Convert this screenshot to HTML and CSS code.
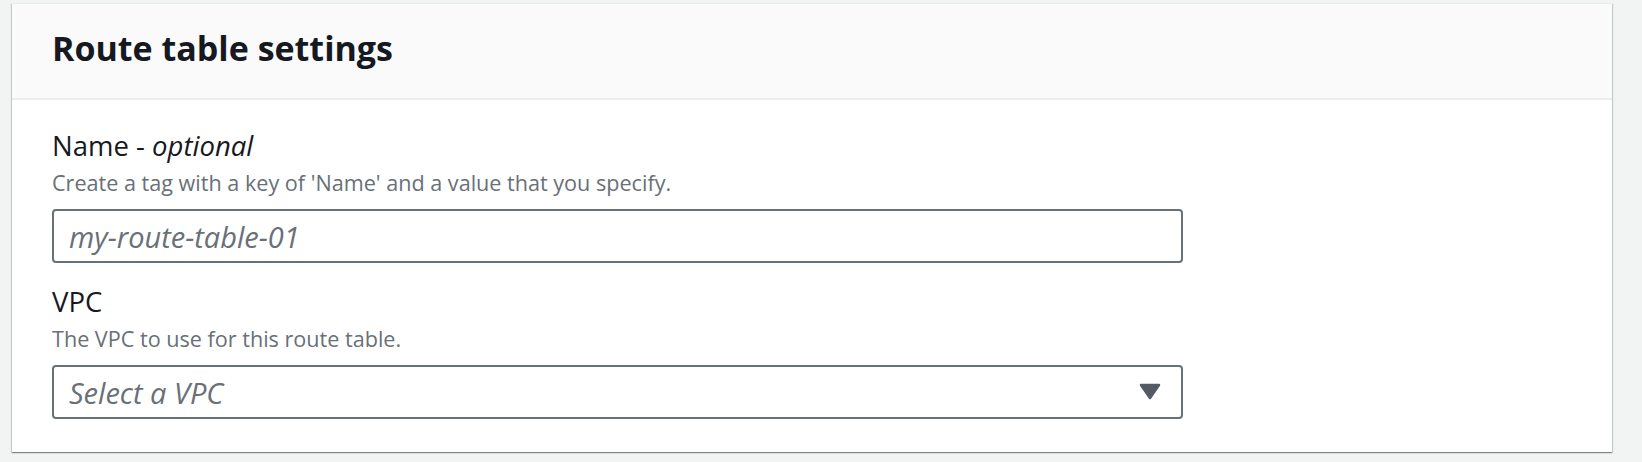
FILE: index.html
```html
<!DOCTYPE html>
<html lang="en">
<head>
<meta charset="utf-8">
<title>Route table settings</title>
<link rel="stylesheet" href="styles.css">
</head>
<body>
  <section class="container">
    <div class="container-header">
      <h2 class="title">Route table settings</h2>
    </div>
    <div class="container-content">
      <div class="field">
        <label class="label" for="rt-name">Name - <i>optional</i></label>
        <div class="description">Create a tag with a key of 'Name' and a value that you specify.</div>
        <input class="control" id="rt-name" type="text" placeholder="my-route-table-01">
      </div>
      <div class="field">
        <label class="label">VPC</label>
        <div class="description">The VPC to use for this route table.</div>
        <div class="control select">
          <span class="select-placeholder">Select a VPC</span>
          <svg class="caret" width="22" height="17" viewBox="0 0 22 17" aria-hidden="true">
            <polygon points="2,2 20,2 11,15" fill="#545b64" stroke="#545b64" stroke-width="2.5" stroke-linejoin="round"/>
          </svg>
        </div>
      </div>
    </div>
  </section>
</body>
</html>
```

FILE: styles.css
```css
html, body {
  margin: 0;
  padding: 0;
}

body {
  background: #f2f3f3;
  padding: 3px 30px 10px 12px;
  font-family: "Open Sans", "Noto Sans", sans-serif;
  color: #16191f;
}

.container {
  background: #ffffff;
  box-shadow: 0 1px 1px 0 rgba(0, 28, 36, 0.3),
              1px 1px 1px 0 rgba(0, 28, 36, 0.15),
              -1px 1px 1px 0 rgba(0, 28, 36, 0.15);
  border-top: 1px solid #eaeded;
}

.container-header {
  background: #fafafa;
  border-bottom: 2px solid #eaeded;
  padding: 24px 40px 30px;
}

.title {
  margin: 0;
  font-size: 34px;
  line-height: 40px;
  font-weight: 700;
  color: #16191f;
}

.container-content {
  padding: 31px 40px 33px;
  display: flex;
  flex-direction: column;
  gap: 24px;
}

.field {
  display: flex;
  flex-direction: column;
}

.label {
  font-size: 27.5px;
  line-height: 30px;
  color: #16191f;
}

.label i {
  font-style: italic;
}

.description {
  margin-top: 8px;
  font-size: 21.6px;
  line-height: 28px;
  color: #687078;
}

.control {
  margin-top: 12px;
  box-sizing: border-box;
  width: 1131px;
  height: 54px;
  border: 2px solid #687078;
  border-radius: 4px;
  background: #ffffff;
  padding: 0 15px;
  font-family: "Open Sans", "Noto Sans", sans-serif;
  font-size: 29px;
  color: #16191f;
  outline: none;
}

.control::placeholder {
  color: #687078;
  font-style: italic;
  opacity: 1;
}

.select {
  display: flex;
  align-items: center;
  justify-content: space-between;
  padding-right: 20px;
}

.select-placeholder {
  font-style: italic;
  color: #687078;
}

.caret {
  display: block;
  margin-top: -2px;
}
```
